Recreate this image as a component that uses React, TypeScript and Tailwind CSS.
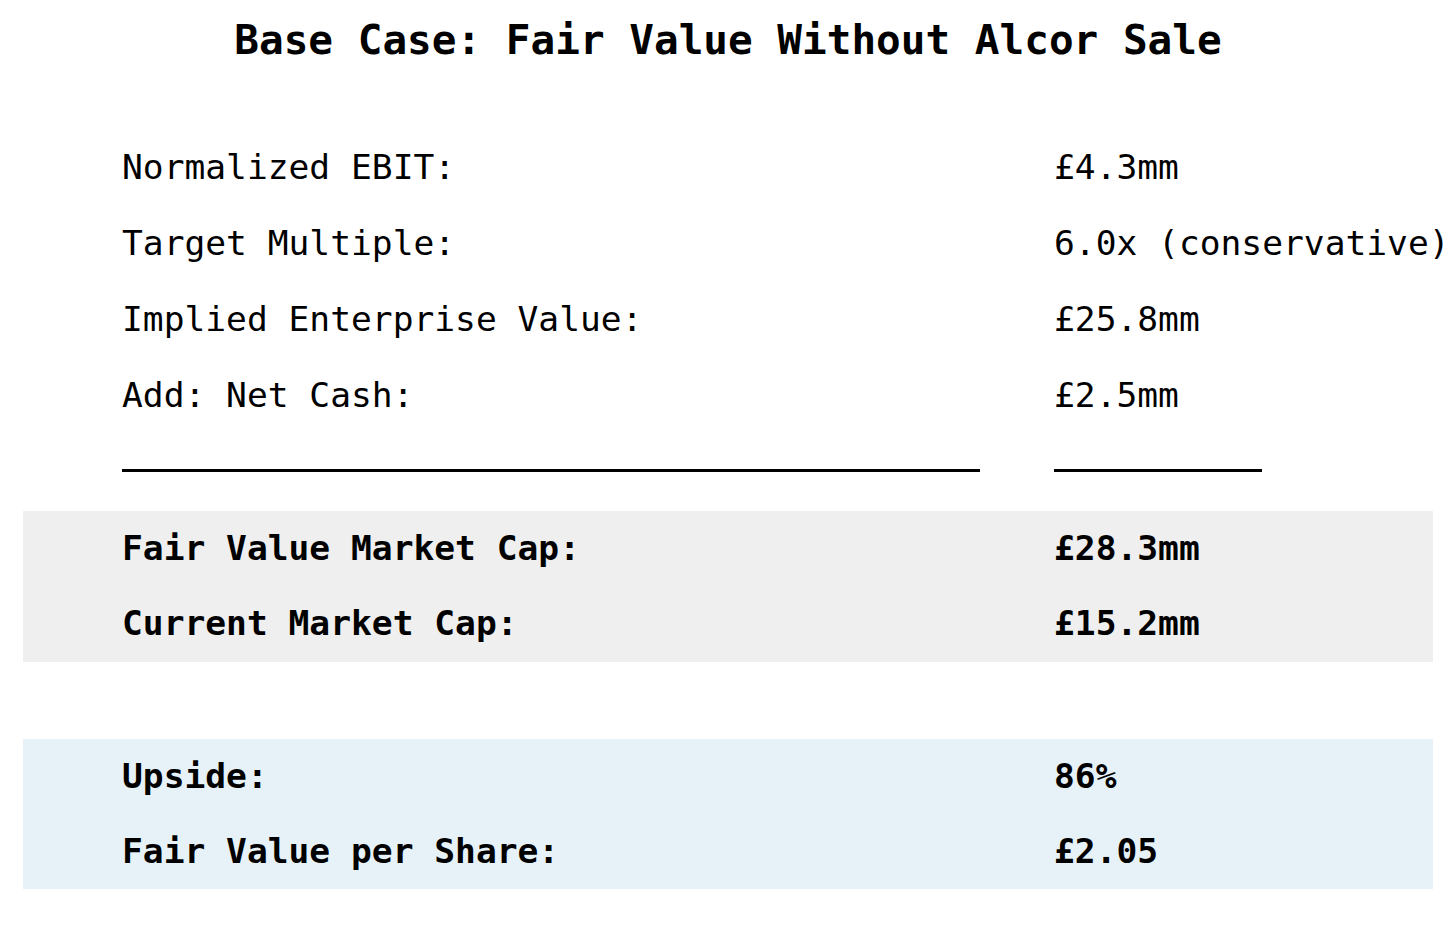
const rows = [
  { label: "Normalized EBIT:", value: "£4.3mm" },
  { label: "Target Multiple:", value: "6.0x (conservative)" },
  { label: "Implied Enterprise Value:", value: "£25.8mm" },
  { label: "Add: Net Cash:", value: "£2.5mm" },
];

const marketCap = [
  { label: "Fair Value Market Cap:", value: "£28.3mm" },
  { label: "Current Market Cap:", value: "£15.2mm" },
];

const result = [
  { label: "Upside:", value: "86%" },
  { label: "Fair Value per Share:", value: "£2.05" },
];

function Row({
  label,
  value,
  bold,
  height,
}: {
  label: string;
  value: string;
  bold?: boolean;
  height: string;
}) {
  return (
    <div
      className={`grid grid-cols-[932px_1fr] items-center whitespace-nowrap pl-[99px] ${height} ${
        bold ? "font-bold" : ""
      }`}
    >
      <span>{label}</span>
      <span>{value}</span>
    </div>
  );
}

export default function App() {
  return (
    <div className="min-h-[928px] w-full bg-white px-[23px] font-['DejaVu_Sans_Mono',monospace] text-[34.6px] text-black">
      <h1 className="mb-[65px] pt-[15px] text-center text-[41px] font-bold leading-[50px]">
        Base Case: Fair Value Without Alcor Sale
      </h1>

      {rows.map((r) => (
        <Row height="h-[76px]" key={r.label} label={r.label} value={r.value} />
      ))}

      <div className="flex h-[77px] items-start pl-[99px] pt-[35px]">
        <div className="h-[3px] w-[858px] bg-black" />
        <div className="ml-[74px] h-[3px] w-[208px] bg-black" />
      </div>

      <div className="bg-[#efefef] pb-[1px]">
        {marketCap.map((r) => (
          <Row bold height="h-[75px]" key={r.label} label={r.label} value={r.value} />
        ))}
      </div>

      <div className="h-[77px]" />

      <div className="bg-[#e6f2f8]">
        {result.map((r) => (
          <Row bold height="h-[75px]" key={r.label} label={r.label} value={r.value} />
        ))}
      </div>
    </div>
  );
}
